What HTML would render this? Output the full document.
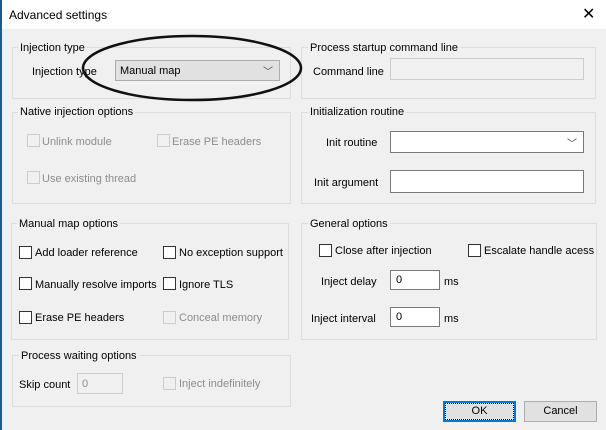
<!DOCTYPE html>
<html><head><style>
*{margin:0;padding:0;box-sizing:border-box}
body{width:606px;height:430px;background:#f0f0f0;font-family:"Liberation Sans",sans-serif;font-size:11px;color:#000;position:relative;overflow:hidden}
.a{position:absolute;white-space:nowrap}
.t{padding-top:2px}
.title{left:0;top:0;width:606px;height:29px;background:#fff}
.g{position:absolute;border:1px solid #dcdcdc}
.gt{position:absolute;background:#f0f0f0;padding:2px 2px 0;white-space:nowrap}
.cb{position:absolute;width:13px;height:13px;border:1px solid #333;background:#fff}
.cb.d{border-color:#ccc;background:#f0f0f0}
.dis{color:#8d8d8d}
.tb{position:absolute;border:1px solid #7a7a7a;background:#fff;padding:3px 5px}
.btn{position:absolute;height:21px;border:1px solid #adadad;background:#e1e1e1;text-align:center;line-height:19px}
</style></head><body>
<div class="a title"></div>
<div class="a" style="left:0;top:0;width:2px;height:430px;background:#1e5a8a"></div>
<div class="a t" style="left:9px;top:6px;font-size:12px">Advanced settings</div>
<div class="a" style="left:582px;top:4px;font-size:16px">✕</div>

<div class="g" style="left:12px;top:47px;width:279px;height:52px"></div>
<div class="gt" style="left:18px;top:40px">Injection type</div>
<div class="a t" style="left:32px;top:64px">Injection type</div>
<div class="a" style="left:115px;top:60px;width:165px;height:21px;border:1px solid #adadad;background:#e1e1e1;padding:4px 4px">Manual map<span style="position:absolute;right:6px;top:2px;font-size:10px;color:#444">﹀</span></div>

<div class="g" style="left:12px;top:112px;width:279px;height:92px"></div>
<div class="gt" style="left:18px;top:104px">Native injection options</div>
<div class="cb d" style="left:27px;top:134px"></div><div class="a t dis" style="left:42px;top:134px">Unlink module</div>
<div class="cb d" style="left:157px;top:134px"></div><div class="a t dis" style="left:172px;top:134px">Erase PE headers</div>
<div class="cb d" style="left:27px;top:171px"></div><div class="a t dis" style="left:42px;top:171px">Use existing thread</div>

<div class="g" style="left:11px;top:223px;width:278px;height:117px"></div>
<div class="gt" style="left:17px;top:216px">Manual map options</div>
<div class="cb" style="left:19px;top:246px"></div><div class="a t" style="left:35px;top:245px">Add loader reference</div>
<div class="cb" style="left:163px;top:246px"></div><div class="a t" style="left:179px;top:245px">No exception support</div>
<div class="cb" style="left:19px;top:277px"></div><div class="a t" style="left:35px;top:277px">Manually resolve imports</div>
<div class="cb" style="left:163px;top:277px"></div><div class="a t" style="left:179px;top:277px">Ignore TLS</div>
<div class="cb" style="left:19px;top:311px"></div><div class="a t" style="left:35px;top:310px">Erase PE headers</div>
<div class="cb d" style="left:163px;top:311px"></div><div class="a t dis" style="left:179px;top:310px">Conceal memory</div>

<div class="g" style="left:12px;top:355px;width:279px;height:52px"></div>
<div class="gt" style="left:19px;top:348px">Process waiting options</div>
<div class="a t" style="left:19px;top:377px">Skip count</div>
<div class="tb" style="left:77px;top:373px;width:46px;height:21px;border-color:#ccc;color:#8d8d8d;background:#f0f0f0;padding:4px 4px">0</div>
<div class="cb d" style="left:163px;top:377px"></div><div class="a t dis" style="left:179px;top:376px">Inject indefinitely</div>

<div class="g" style="left:301px;top:47px;width:295px;height:52px"></div>
<div class="gt" style="left:308px;top:40px">Process startup command line</div>
<div class="a t" style="left:313px;top:64px">Command line</div>
<div class="a" style="left:390px;top:58px;width:194px;height:22px;border:1px solid #ccc;background:#f0f0f0"></div>

<div class="g" style="left:301px;top:112px;width:295px;height:92px"></div>
<div class="gt" style="left:308px;top:104px">Initialization routine</div>
<div class="a t" style="left:326px;top:135px">Init routine</div>
<div class="a" style="left:390px;top:131px;width:194px;height:22px;border:1px solid #7a7a7a;background:#fff"><span style="position:absolute;right:6px;top:3px;font-size:10px;color:#444">﹀</span></div>
<div class="a t" style="left:314px;top:175px">Init argument</div>
<div class="a" style="left:390px;top:170px;width:194px;height:23px;border:1px solid #7a7a7a;background:#fff"></div>

<div class="g" style="left:301px;top:223px;width:296px;height:117px"></div>
<div class="gt" style="left:308px;top:216px">General options</div>
<div class="cb" style="left:319px;top:244px"></div><div class="a t" style="left:335px;top:243px">Close after injection</div>
<div class="cb" style="left:468px;top:244px"></div><div class="a t" style="left:484px;top:243px">Escalate handle acess</div>
<div class="a t" style="left:321px;top:274px">Inject delay</div>
<div class="tb" style="left:390px;top:270px;width:50px;height:20px">0</div>
<div class="a t" style="left:444px;top:274px">ms</div>
<div class="a t" style="left:311px;top:311px">Inject interval</div>
<div class="tb" style="left:390px;top:307px;width:50px;height:20px">0</div>
<div class="a t" style="left:444px;top:311px">ms</div>

<div class="btn" style="left:443px;top:401px;width:73px;border:2px solid #0078d7;outline:1px dotted #000;outline-offset:-3px;line-height:17px">OK</div>
<div class="btn" style="left:524px;top:401px;width:73px">Cancel</div>

<svg class="a" style="left:0;top:0" width="606" height="430"><ellipse cx="192" cy="68" rx="109" ry="32" fill="none" stroke="#111" stroke-width="2.5"/></svg>
</body></html>
